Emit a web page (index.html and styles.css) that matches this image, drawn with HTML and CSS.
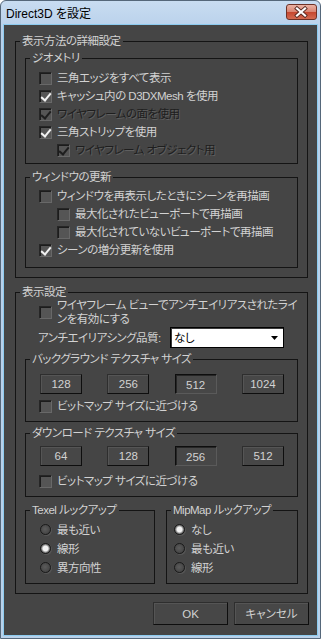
FILE: index.html
```html
<!DOCTYPE html>
<html lang="ja">
<head>
    <meta charset="UTF-8">
    <meta name="viewport" content="width=device-width, initial-scale=1.0">
    <title>Direct3D を設定</title>
    <link rel="stylesheet" href="styles.css">
</head>
<body>
    <div class="window">
        <div class="titlebar">
            <span class="title">Direct3D を設定</span>
            <button class="close" type="button" aria-label="閉じる">
                <svg width="29" height="14" viewBox="0 0 29 14">
                    <path d="M10 3.5 L18 10.5 M18 3.5 L10 10.5" stroke="#5a2a22" stroke-width="4" stroke-linecap="square"/>
                    <path d="M10 3.5 L18 10.5 M18 3.5 L10 10.5" stroke="#ffffff" stroke-width="2.2" stroke-linecap="square"/>
                </svg>
            </button>
        </div>

        <div class="client">
            <fieldset class="group main">
                <legend>表示方法の詳細設定</legend>

                <fieldset class="group sub geometry">
                    <legend>ジオメトリ</legend>
                    <div class="check"><span class="box"></span>三角エッジをすべて表示</div>
                    <div class="check"><span class="box on"></span>キャッシュ内の D3DXMesh を使用</div>
                    <div class="check dis"><span class="box on"></span>ワイヤフレームの面を使用</div>
                    <div class="check"><span class="box on"></span>三角ストリップを使用</div>
                    <div class="check indent dis"><span class="box on"></span>ワイヤフレーム オブジェクト用</div>
                </fieldset>

                <fieldset class="group sub redraw">
                    <legend>ウィンドウの更新</legend>
                    <div class="check"><span class="box"></span>ウィンドウを再表示したときにシーンを再描画</div>
                    <div class="check indent"><span class="box"></span>最大化されたビューポートで再描画</div>
                    <div class="check indent"><span class="box"></span>最大化されていないビューポートで再描画</div>
                    <div class="check"><span class="box on"></span>シーンの増分更新を使用</div>
                </fieldset>
            </fieldset>

            <fieldset class="group main display">
                <legend>表示設定</legend>

                <div class="check wrap"><span class="box"></span><span>ワイヤフレーム ビューでアンチエイリアスされたライ<br>ンを有効にする</span></div>

                <div class="quality">
                    <span class="quality-label">アンチエイリアシング品質:</span>
                    <div class="select">
                        <span>なし</span>
                        <svg width="7" height="4" viewBox="0 0 7 4"><path d="M0 0 H7 L3.5 4 Z" fill="#000"/></svg>
                    </div>
                </div>

                <fieldset class="group sub bg-tex">
                    <legend>バックグラウンド テクスチャ サイズ</legend>
                    <div class="sizes">
                        <button class="btn size" type="button">128</button>
                        <button class="btn size" type="button">256</button>
                        <button class="btn size pressed" type="button">512</button>
                        <button class="btn size" type="button">1024</button>
                    </div>
                    <div class="check"><span class="box"></span>ビットマップ サイズに近づける</div>
                </fieldset>

                <fieldset class="group sub dl-tex">
                    <legend>ダウンロード テクスチャ サイズ</legend>
                    <div class="sizes">
                        <button class="btn size" type="button">64</button>
                        <button class="btn size" type="button">128</button>
                        <button class="btn size pressed" type="button">256</button>
                        <button class="btn size" type="button">512</button>
                    </div>
                    <div class="check"><span class="box"></span>ビットマップ サイズに近づける</div>
                </fieldset>

                <div class="lookups">
                    <fieldset class="group texel">
                        <legend>Texel ルックアップ</legend>
                        <div class="radio"><span class="dot"></span>最も近い</div>
                        <div class="radio"><span class="dot on"></span>線形</div>
                        <div class="radio"><span class="dot"></span>異方向性</div>
                    </fieldset>
                    <fieldset class="group mipmap">
                        <legend>MipMap ルックアップ</legend>
                        <div class="radio"><span class="dot on"></span>なし</div>
                        <div class="radio"><span class="dot"></span>最も近い</div>
                        <div class="radio"><span class="dot"></span>線形</div>
                    </fieldset>
                </div>
            </fieldset>

            <div class="actions">
                <button class="btn action" type="button">OK</button>
                <button class="btn action" type="button">キャンセル</button>
            </div>
        </div>
    </div>
</body>
</html>
```

FILE: styles.css
```css
* {
    box-sizing: border-box;
}

body {
    margin: 0;
    font-family: "Liberation Sans", "Noto Sans CJK JP", sans-serif;
    font-size: 11.5px;
    line-height: 14px;
    letter-spacing: -0.5px;
    font-feature-settings: "palt";
    background: #ffffff;
}

.window {
    width: 321px;
    height: 639px;
    border: 1px solid #55677a;
    border-radius: 6px 6px 0 0;
    background: linear-gradient(#c8dcf1, #b8d0ea 30px, #b9d1ea);
    padding: 0 3px 3px;
    display: flex;
    flex-direction: column;
}

/* title bar */
.titlebar {
    height: 24px;
    flex: none;
    display: flex;
    align-items: flex-start;
    justify-content: space-between;
}

.title {
    margin: 6px 0 0 2px;
    color: #000000;
    font-size: 12px;
    letter-spacing: 0;
}

.close {
    margin: 3px 0 0 0;
    width: 31px;
    height: 16px;
    padding: 0;
    border: 1px solid #6e3126;
    border-radius: 3px;
    background: linear-gradient(#eab2a4, #d98572 48%, #c5472f 52%, #d36b51);
    display: flex;
    align-items: center;
    justify-content: center;
}

/* dialog body */
.client {
    flex: 1;
    background: #454545;
    color: #d2d2d2;
    box-shadow: 0 0 0 1px #8ccbef;
    padding-top: 9px;
}

.group {
    border: 1px solid #141414;
    margin: 0;
    padding: 0 4px;
    min-width: 0;
}

.group legend {
    padding: 0 2px;
    height: 14px;
    white-space: nowrap;
}

.main {
    margin: 0 9px 0 11px;
    padding-bottom: 9px;
}

.display {
    margin-top: 7px;
}

.sub {
    margin: 0 5px;
}

.geometry {
    margin-top: 3px;
    padding-top: 4px;
    padding-bottom: 4px;
}

.redraw {
    margin-top: 6px;
    padding-top: 3px;
    padding-bottom: 8px;
}

/* checkboxes */
.check {
    display: flex;
    align-items: center;
    gap: 5px;
    height: 18px;
    margin-left: 9px;
    white-space: nowrap;
}

.check.indent {
    margin-left: 27px;
}

.check.wrap {
    height: 28px;
    margin: -1px 0 0 19px;
}

.box {
    width: 13px;
    height: 13px;
    flex: none;
    position: relative;
    background: #555555;
    border: 1px solid;
    border-color: #262626 #686868 #686868 #262626;
    box-shadow: inset 1px 1px 0 #1c1c1c;
}

.box.on::after {
    content: "";
    position: absolute;
    left: 3px;
    top: 0;
    width: 4px;
    height: 8px;
    border: solid #f2f2f2;
    border-width: 0 2px 2px 0;
    transform: rotate(40deg);
}

.dis {
    color: #1e1e1e;
    text-shadow: 1px 1px 0 #5f5f5f;
}

.dis .box.on::after {
    border-color: #1e1e1e;
}

/* quality select */
.quality {
    display: flex;
    align-items: center;
    margin: 1px 0 0 18px;
    white-space: nowrap;
}

.quality-label {
    width: 132px;
    flex: none;
}

.select {
    width: 114px;
    height: 21px;
    flex: none;
    background: #ffffff;
    color: #000000;
    border: 1px solid #000000;
    box-shadow: inset 1px 1px 0 #3a3a3a;
    display: flex;
    align-items: center;
    justify-content: space-between;
    padding: 1px 5px 0 3px;
}

/* texture size groups */
.bg-tex {
    margin-top: 4px;
    padding-top: 8px;
    padding-bottom: 6px;
}

.bg-tex .check {
    margin-top: 3px;
}

.dl-tex {
    margin-top: 4px;
    padding-top: 6px;
    padding-bottom: 6px;
}

.dl-tex .check {
    margin-top: 6px;
}

.sizes {
    display: flex;
    justify-content: space-between;
    margin: 0 9px 0 10px;
}

.btn {
    font: inherit;
    letter-spacing: 0;
    font-feature-settings: "palt";
    color: #d2d2d2;
    background: #474747;
    border: 1px solid;
    border-color: #2e2e2e #0e0e0e #0e0e0e #2e2e2e;
    box-shadow: inset 1px 1px 0 #555555;
    padding: 0;
}

.size {
    width: 42px;
    height: 20px;
}

.btn.pressed {
    border-color: #0e0e0e #5a5a5a #5a5a5a #0e0e0e;
    box-shadow: inset 1px 1px 0 #262626;
    padding-top: 2px;
}

/* lookup radios */
.lookups {
    display: grid;
    grid-template-columns: 130px 1fr;
    column-gap: 11px;
    margin: 6px 5px 0;
}

.texel,
.mipmap {
    padding-top: 3px;
    padding-bottom: 6px;
}

.radio {
    display: flex;
    align-items: center;
    gap: 6px;
    height: 19px;
    margin-left: 10px;
}

.mipmap .radio {
    margin-left: 3px;
}

.dot {
    width: 11px;
    height: 11px;
    flex: none;
    border-radius: 50%;
    border: 1px solid #1a1a1a;
    background: radial-gradient(circle at 45% 45%, #5c5c5c, #3c3c3c);
    box-shadow: 1px 1px 0 #555555;
}

.dot.on {
    background: radial-gradient(circle, #f2f2f2 0 2.5px, #9a9a9a 3.5px, #4a4a4a 5px);
}

/* bottom buttons */
.actions {
    display: flex;
    justify-content: flex-end;
    gap: 6px;
    margin: 8px 8px 0 0;
}

.action {
    width: 75px;
    height: 23px;
}
```
